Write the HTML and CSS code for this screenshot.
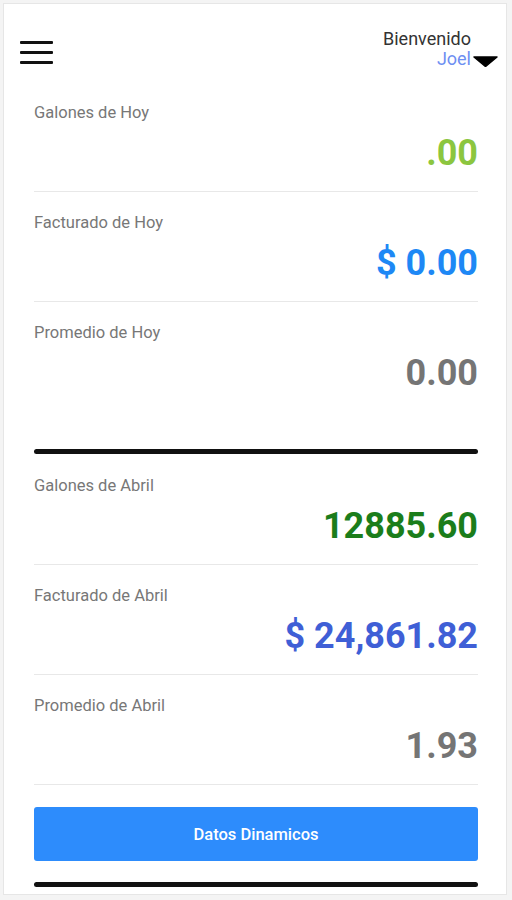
FILE: index.html
```html
<!DOCTYPE html>
<html lang="es">
<head>
  <meta charset="UTF-8" />
  <title>Resumen de Ventas</title>
  <link rel="stylesheet" href="styles.css">
</head>
<body>
  <div class="card">
    <header class="topbar">
      <div class="menu-btn">
        <span></span>
        <span></span>
        <span></span>
      </div>
      <div class="user">
        <div class="user-text">
          <div class="welcome">Bienvenido</div>
          <div class="name">Joel</div>
        </div>
        <svg class="caret" width="25" height="11" viewBox="0 0 25 11">
          <path d="M1 1 L24 1 L12.5 10.5 Z" fill="#000" stroke="#000" stroke-width="1.5" stroke-linejoin="round"/>
        </svg>
      </div>
    </header>

    <main class="content">
      <section class="stats">
        <div class="item">
          <div class="label">Galones de Hoy</div>
          <div class="value lime">.00</div>
        </div>
        <div class="item">
          <div class="label">Facturado de Hoy</div>
          <div class="value sky">$ 0.00</div>
        </div>
        <div class="item last">
          <div class="label">Promedio de Hoy</div>
          <div class="value grey">0.00</div>
        </div>
      </section>

      <div class="bar"></div>

      <section class="stats">
        <div class="item">
          <div class="label">Galones de Abril</div>
          <div class="value green">12885.60</div>
        </div>
        <div class="item">
          <div class="label">Facturado de Abril</div>
          <div class="value royal">$ 24,861.82</div>
        </div>
        <div class="item">
          <div class="label">Promedio de Abril</div>
          <div class="value grey">1.93</div>
        </div>
      </section>

      <button class="btn">Datos Dinamicos</button>

      <div class="bar bottom"></div>
    </main>
  </div>
</body>
</html>
```

FILE: styles.css
```css
body {
  font-family: Roboto, "Liberation Sans", Arial, sans-serif;
  background-color: #f4f4f4;
  margin: 0;
}

.card {
  margin: 3px 5px 0 3px;
  height: 892px;
  background: white;
  border: 1px solid #e6e6e6;
  box-sizing: border-box;
}

.topbar {
  display: flex;
  justify-content: space-between;
  align-items: flex-start;
  padding: 25px 8px 0 16px;
  height: 78px;
  box-sizing: border-box;
}

.menu-btn {
  margin-top: 12px;
  width: 33px;
}

.menu-btn span {
  display: block;
  height: 3px;
  background: #111;
  border-radius: 1px;
  margin-bottom: 7px;
}

.user {
  display: flex;
  align-items: flex-end;
}

.user-text {
  text-align: right;
  font-size: 18px;
  line-height: 20px;
}

.welcome {
  color: #333;
}

.name {
  color: #6e8ff2;
}

.caret {
  margin-left: 2px;
  margin-bottom: 2px;
}

.content {
  padding: 0 28px 0 30px;
}

.item {
  padding: 21px 0 17px;
  border-bottom: 1px solid #e8e8e8;
}

.item.last {
  border-bottom: none;
}

.label {
  font-size: 16.5px;
  line-height: 20px;
  color: #777;
}

.value {
  margin-top: 9px;
  font-size: 36px;
  line-height: 42px;
  font-weight: 700;
  text-align: right;
}

.lime { color: #8cc63f; }
.sky { color: #1e88f5; }
.grey { color: #757575; }
.green { color: #1b7d1b; }
.royal { color: #3f5fd6; }

.bar {
  height: 5px;
  background: #111;
  border-radius: 3px;
  margin: 38px 0 1px;
}

.btn {
  display: block;
  width: 100%;
  height: 54px;
  margin-top: 22px;
  background: #2d8cfc;
  color: white;
  border: none;
  border-radius: 3px;
  font-family: inherit;
  font-size: 16.5px;
  font-weight: 500;
}

.bar.bottom {
  margin-top: 21px;
}
```
